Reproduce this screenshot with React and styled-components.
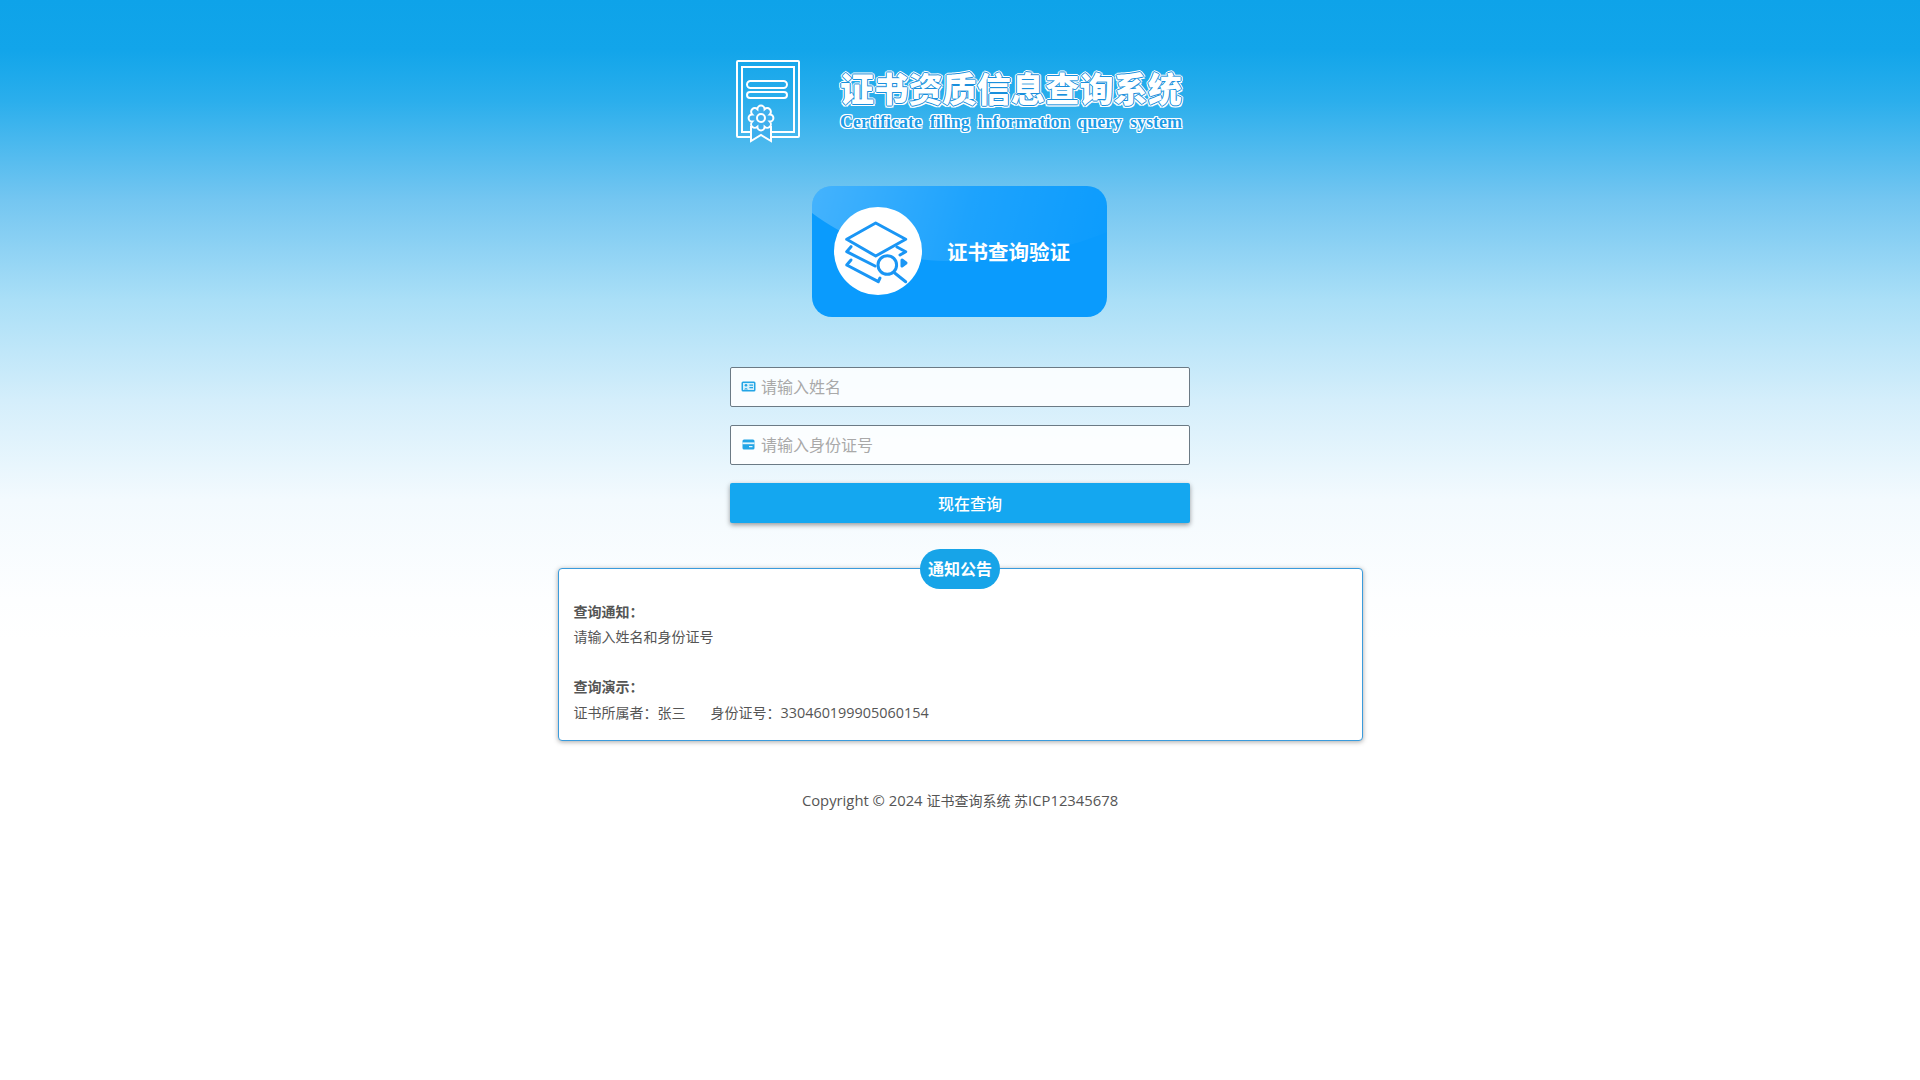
import React from 'react';
import styled, { createGlobalStyle } from 'styled-components';

const GlobalStyle = createGlobalStyle`
  html, body {
    margin: 0;
    padding: 0;
    background: #fff;
  }
  body {
    font-family: "Open Sans", "Noto Sans CJK SC", sans-serif;
    color: #555;
  }
`;

const Page = styled.div`
  min-height: 1080px;
  display: flex;
  flex-direction: column;
  align-items: center;
  padding-top: 60px;
  box-sizing: border-box;
  background: linear-gradient(
      to bottom,
      #0ea3e9 0,
      #12a5ea 50px,
      #2aaeec 100px,
      #74c6f1 200px,
      #aadff7 300px,
      #d4eefb 400px,
      #f3fafe 500px,
      #fdfeff 600px,
      #ffffff 640px
    )
    no-repeat;
  background-size: 100% 640px;
`;

const Header = styled.header`
  display: flex;
  align-items: flex-start;
  gap: 39px;
  width: 448px;
  height: 82px;
`;

const TitleBlock = styled.div`
  width: 344px;
  padding-top: 10px;
`;

const CnTitle = styled.div`
  font-family: "Liberation Serif", "Noto Sans CJK SC", serif;
  font-size: 34px;
  line-height: 42px;
  font-weight: 900;
  letter-spacing: 0.2px;
  white-space: nowrap;
  color: #fff;
  text-shadow:
    0 0 1px #1b8fdc, 1px 0 0 #1b8fdc, -1px 0 0 #1b8fdc, 0 1px 0 #1b8fdc, 0 -1px 0 #1b8fdc,
    2px 0 0 #fff, -2px 0 0 #fff, 0 2px 0 #fff, 0 -2px 0 #fff,
    1.5px 1.5px 0 #fff, -1.5px 1.5px 0 #fff, 1.5px -1.5px 0 #fff, -1.5px -1.5px 0 #fff;
`;

const EnTitle = styled.div`
  font-family: "Liberation Serif", serif;
  font-size: 18px;
  line-height: 20px;
  font-weight: 700;
  margin-right: 2px;
  color: #1c9be6;
  text-align: justify;
  text-align-last: justify;
  text-shadow:
    1px 0 0 #fff, -1px 0 0 #fff, 0 1px 0 #fff, 0 -1px 0 #fff,
    1px 1px 0 #fff, -1px 1px 0 #fff, 1px -1px 0 #fff, -1px -1px 0 #fff;
`;

const VerifyCard = styled.div`
  position: relative;
  overflow: hidden;
  display: flex;
  align-items: center;
  gap: 25px;
  width: 295px;
  height: 131px;
  margin: 44px 1px 1px 0;
  padding: 0 0 1px 22px;
  box-sizing: border-box;
  border-radius: 20px;
  background: #0a9bfd;

  &::before {
    content: '';
    position: absolute;
    inset: 0;
    background: linear-gradient(105deg, rgba(255, 255, 255, 0.24) 0%, rgba(255, 255, 255, 0.08) 50%, rgba(255, 255, 255, 0) 100%);
    clip-path: path('M0 0 H295 V46 C 240 70 120 90 60 60 C 35 50 15 38 0 27 Z');
  }
`;

const IconCircle = styled.div`
  position: relative;
  flex: none;
  width: 88px;
  height: 88px;
  border-radius: 50%;
  background: #fff;
`;

const CardText = styled.div`
  position: relative;
  font-size: 20.5px;
  font-weight: 700;
  color: #fff;
  white-space: nowrap;
`;

const Form = styled.form`
  display: flex;
  flex-direction: column;
  gap: 18px;
  width: 460px;
  margin-top: 49px;
`;

const Field = styled.label`
  position: relative;
  display: block;
  height: 40px;
`;

const FieldIcon = styled.svg`
  position: absolute;
  left: 11px;
  top: 13px;
  width: 15px;
  height: 13px;
`;

const Input = styled.input`
  display: block;
  width: 100%;
  height: 40px;
  box-sizing: border-box;
  padding: 0 10px 0 30px;
  border: 1px solid #6b7a85;
  border-radius: 2px;
  background: rgba(255, 255, 255, 0.88);
  font: 16px "Open Sans", "Noto Sans CJK SC", sans-serif;
  color: #555;
  outline: none;

  &::placeholder {
    color: #a9a9a9;
    opacity: 1;
  }
`;

const SubmitButton = styled.button`
  height: 40px;
  padding: 0 0 0 20px;
  border: none;
  border-radius: 2px;
  background: #14a7f0;
  box-shadow: 0 2px 5px rgba(0, 0, 0, 0.4);
  font: 500 16px "Open Sans", "Noto Sans CJK SC", sans-serif;
  color: #fff;
  cursor: pointer;
`;

const Notice = styled.section`
  position: relative;
  width: 805px;
  height: 173px;
  margin-top: 45px;
  padding: 30px 15px 0;
  box-sizing: border-box;
  border: 1px solid #3a9bdc;
  border-radius: 4px;
  background: #fff;
  box-shadow: 0 1px 5px rgba(0, 0, 0, 0.35);
  font-size: 14px;
  line-height: 25px;
  color: #555;
`;

const NoticeBadge = styled.div`
  position: absolute;
  top: -20px;
  left: 50%;
  transform: translateX(-50%);
  width: 80px;
  height: 40px;
  border-radius: 20px;
  background: #17a4e8;
  font-size: 16px;
  font-weight: 700;
  line-height: 40px;
  text-align: center;
  color: #fff;
`;

const NoticeLine = styled.p`
  margin: 0;
  min-height: 25px;
  font-weight: ${(props) => (props.$bold ? 700 : 400)};
  white-space: pre-wrap;
`;

const DemoLine = styled(NoticeLine)`
  padding-top: 1px;
`;

const Spaced = styled.span`
  margin-left: 25px;
`;

const Digits = styled.span`
  font-size: 14.4px;
`;

const Footer = styled.footer`
  margin-top: 48px;
  font-size: 14.8px;
  line-height: 22px;
  color: #555;
  text-align: center;
`;

const FooterCn = styled.span`
  font-size: 14px;
`;

// eight lobed seal of the certificate ribbon
const sealPath = (cx, cy, r) => {
  const pts = [];
  for (let i = 0; i < 8; i++) {
    const a = (i * Math.PI) / 4 + Math.PI / 8;
    pts.push([cx + r * Math.cos(a), cy + r * Math.sin(a)]);
  }
  return `M${pts[7][0].toFixed(1)} ${pts[7][1].toFixed(1)} ` + pts.map((p) => `A3 3 0 0 1 ${p[0].toFixed(1)} ${p[1].toFixed(1)}`).join(' ') + ' Z';
};

const LogoIcon = () => (
  <svg width="66" height="84" viewBox="0 0 66 84" fill="none" stroke="#fff" strokeWidth="2" style={{ flex: 'none', marginLeft: '-1px' }}>
    <path d="M15 77 H3 Q2 77 2 76 V2 Q2 1 3 1 H63 Q64 1 64 2 V76 Q64 77 63 77 H36" />
    <path d="M15 72 H7 V7 H59 V72 H36" />
    <rect x="12" y="21" width="40" height="7" rx="3.5" />
    <rect x="12" y="32" width="40" height="6" rx="3" />
    <path d="M16 66 V81 L26 75 L36 81 V66" fill="#3fb0ee" />
    <path d={sealPath(26, 58, 9.5)} fill="#3fb0ee" />
    <circle cx="26" cy="58" r="4" />
  </svg>
);

const LayersIcon = () => (
  <svg width="88" height="88" viewBox="0 0 88 88" fill="none" stroke="#1a96f5" strokeWidth="3" strokeLinecap="round" strokeLinejoin="round">
    <path d="M41.7 16 L71.7 32.3 L41.7 49 L12.7 32.3 Z" />
    <path d="M17 39.7 L12.7 44.7 L41 59" />
    <path d="M63 40 L71.7 44.7 L66 48" />
    <path d="M17 53 L12.7 58 L44.3 74.7 L46 71" />
    <circle cx="53.3" cy="58" r="9.3" />
    <path d="M61 66.3 L71.7 74.7" />
    <path d="M68 53 L72 56 L68 59 Z" fill="#1a96f5" />
  </svg>
);

const NameIcon = () => (
  <FieldIcon viewBox="0 0 15 13">
    <rect x="0.5" y="1.5" width="14" height="10" rx="1.5" fill="#23a5e6" />
    <rect x="2" y="3" width="11" height="7" fill="#d6f0fb" />
    <circle cx="5" cy="5.2" r="1.3" fill="#23a5e6" />
    <path d="M3 9.4 Q5 6.4 7 9.4 Z M8.4 4.6 H12 V5.8 H8.4 Z M8.4 7 H12 V8.2 H8.4 Z" fill="#23a5e6" />
  </FieldIcon>
);

const CardIcon = () => (
  <FieldIcon viewBox="0 0 15 13">
    <rect x="1.5" y="1.5" width="12" height="10" rx="1.5" fill="#23a5e6" />
    <rect x="1.5" y="4.4" width="12" height="1.8" fill="#e4f5fc" />
    <rect x="8" y="8" width="3.5" height="1.2" fill="#e4f5fc" />
  </FieldIcon>
);

export default function App() {
  return (
    <>
      <GlobalStyle />
      <Page>
        <Header>
          <LogoIcon />
          <TitleBlock>
            <CnTitle>证书资质信息查询系统</CnTitle>
            <EnTitle>Certificate filing information query system</EnTitle>
          </TitleBlock>
        </Header>

        <VerifyCard>
          <IconCircle>
            <LayersIcon />
          </IconCircle>
          <CardText>证书查询验证</CardText>
        </VerifyCard>

        <Form onSubmit={(e) => e.preventDefault()}>
          <Field>
            <Input placeholder="请输入姓名" />
            <NameIcon />
          </Field>
          <Field>
            <Input placeholder="请输入身份证号" />
            <CardIcon />
          </Field>
          <SubmitButton type="submit">现在查询</SubmitButton>
        </Form>

        <Notice>
          <NoticeBadge>通知公告</NoticeBadge>
          <NoticeLine $bold>查询通知：</NoticeLine>
          <NoticeLine>请输入姓名和身份证号</NoticeLine>
          <NoticeLine />
          <NoticeLine $bold>查询演示：</NoticeLine>
          <DemoLine>
            证书所属者：张三<Spaced>身份证号：<Digits>330460199905060154</Digits></Spaced>
          </DemoLine>
        </Notice>

        <Footer>
          Copyright © 2024 <FooterCn>证书查询系统 苏</FooterCn>ICP12345678
        </Footer>
      </Page>
    </>
  );
}
